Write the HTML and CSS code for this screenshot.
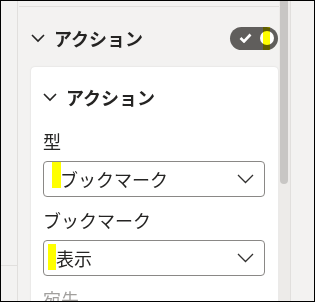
FILE: index.html
```html
<!DOCTYPE html>
<html lang="ja">
<head>
<meta charset="UTF-8" />
<title>アクション</title>
<link rel="stylesheet" href="styles.css">
</head>
<body>

<div class="frame">
  <!-- left rail -->
  <div class="rail"><div class="rail-line"></div></div>

  <!-- format pane -->
  <div class="pane">
    <div class="pane-top"></div>

    <div class="section-head">
      <svg class="chev" width="14" height="10" viewBox="0 0 14 10"><path d="M1 2 L7 8 L13 2" fill="none" stroke="#252423" stroke-width="1.6"/></svg>
      <span class="section-title">アクション</span>
      <div class="toggle">
        <svg class="tick" width="13" height="10" viewBox="0 0 13 10"><path d="M1.5 5 L5 8.5 L11.5 1.5" fill="none" stroke="#fff" stroke-width="2.6"/></svg>
        <span class="knob"></span>
        <span class="mark mark-toggle"></span>
      </div>
    </div>

    <div class="card">
      <div class="card-head">
        <svg class="chev" width="14" height="10" viewBox="0 0 14 10"><path d="M1 2 L7 8 L13 2" fill="none" stroke="#252423" stroke-width="1.6"/></svg>
        <span class="card-title">アクション</span>
      </div>

      <div class="label">型</div>
      <div class="select select-type">
        <span class="mark mark-sel1"></span>
        <span class="value">ブックマーク</span>
        <svg width="17" height="10" viewBox="0 0 17 10"><path d="M1 1 L8.5 8.5 L16 1" fill="none" stroke="#323130" stroke-width="1.3"/></svg>
      </div>

      <div class="label">ブックマーク</div>
      <div class="select select-bookmark">
        <span class="mark mark-sel2"></span>
        <span class="value">表示</span>
        <svg width="17" height="10" viewBox="0 0 17 10"><path d="M1 1 L8.5 8.5 L16 1" fill="none" stroke="#323130" stroke-width="1.3"/></svg>
      </div>

      <div class="label muted">宛先</div>
    </div>
  </div>

  <!-- scrollbar -->
  <div class="scroll"><div class="thumb"></div></div>
  <div class="gutter"></div>
</div>

</body>
</html>
```

FILE: styles.css
```css
body {
  margin: 0;
  font-family: "Noto Sans CJK JP", "Noto Sans", sans-serif;
  color: #252423;
}
.frame {
  width: 315px;
  height: 302px;
  box-sizing: border-box;
  border: 1px solid #000;
  background: #f3f2f1;
  display: flex;
  overflow: hidden;
}

/* Rail */
.rail {
  width: 16px;
  border-right: 1px solid #e1dfdd;
  flex: none;
}
.rail-line {
  height: 264px;
  border-bottom: 1px solid #e1dfdd;
}

/* Pane */
.pane {
  width: 261px;
  flex: none;
  position: relative;
}
.pane-top {
  margin: 5px 0 0 1px;
  border-top: 1px solid #e1dfdd;
}
.section-head {
  display: flex;
  align-items: center;
  height: 24px;
  margin: 19px 1px 0 13px;
}
.chev { flex: none; margin-top: -1px; }
.section-title {
  margin-left: 9px;
  font-size: 18px;
  font-weight: 700;
  line-height: 24px;
}
.toggle {
  margin-left: auto;
  width: 48px;
  height: 23px;
  border-radius: 12px;
  background: #605e5c;
  display: flex;
  align-items: center;
  position: relative;
}
.tick { margin-left: 9px; }
.knob {
  width: 14px;
  height: 14px;
  border-radius: 50%;
  background: #fff;
  margin-left: 8px;
}
.mark {
  position: absolute;
  background: #ffff00;
}
.mark-toggle {
  left: 33px;
  top: 0;
  width: 7px;
  height: 23px;
  mix-blend-mode: multiply;
}

/* Card */
.card {
  margin: 17px 1px 0 13px;
  background: #fff;
  border-radius: 4px;
  box-shadow: 0 0 2px rgba(0,0,0,0.12);
  padding: 18px 13px 0 12px;
  height: 260px;
}
.card-head {
  display: flex;
  align-items: center;
  height: 24px;
}
.card-title {
  margin-left: 9px;
  font-size: 18px;
  font-weight: 700;
  line-height: 24px;
}
.label {
  font-size: 18px;
  line-height: 24px;
  margin-top: 20px;
}
.label.muted {
  color: #a19f9d;
  margin-top: 12px;
}
.select {
  margin-top: 8px;
  height: 36px;
  box-sizing: border-box;
  border: 1px solid #8a8886;
  border-radius: 4px;
  display: flex;
  align-items: center;
  padding: 0 10px 0 0;
  position: relative;
}
.select + .label { margin-top: 11px; }
.select .value {
  font-size: 18px;
  line-height: 24px;
  flex: 1;
}
.select-type .value { margin-left: 16px; }
.select-bookmark .value { margin-left: 12px; }
.mark-sel1 {
  left: 8px;
  top: 0;
  width: 9px;
  height: 26px;
}
.mark-sel2 {
  left: 4px;
  top: 3px;
  width: 8px;
  height: 26px;
}

/* Scrollbar */
.scroll {
  width: 10px;
  flex: none;
  background: #edebe9;
  border-right: 1px solid #e1dfdd;
  padding-left: 1px;
}
.thumb {
  width: 8px;
  height: 183px;
  background: #c8c6c4;
  border-radius: 0 0 4px 4px;
}
.gutter { flex: 1; }
```
